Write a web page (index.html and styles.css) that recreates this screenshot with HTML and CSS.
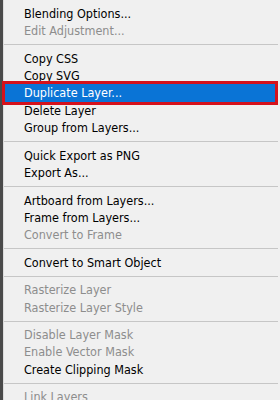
FILE: index.html
```html
<!DOCTYPE html>
<html>
<head>
<meta charset="utf-8">
<link rel="stylesheet" href="styles.css">
</head>
<body>
<div class="frame">
  <div class="edge"></div>
  <ul class="menu">
    <li class="item">Blending Options...</li>
    <li class="item off">Edit Adjustment...</li>
    <li class="sep"></li>
    <li class="item">Copy CSS</li>
    <li class="item">Copy SVG</li>
    <li class="item active">Duplicate Layer...</li>
    <li class="item">Delete Layer</li>
    <li class="item">Group from Layers...</li>
    <li class="sep"></li>
    <li class="item">Quick Export as PNG</li>
    <li class="item">Export As...</li>
    <li class="sep"></li>
    <li class="item">Artboard from Layers...</li>
    <li class="item">Frame from Layers...</li>
    <li class="item off">Convert to Frame</li>
    <li class="sep"></li>
    <li class="item">Convert to Smart Object</li>
    <li class="sep"></li>
    <li class="item off">Rasterize Layer</li>
    <li class="item off">Rasterize Layer Style</li>
    <li class="sep"></li>
    <li class="item off">Disable Layer Mask</li>
    <li class="item off">Enable Vector Mask</li>
    <li class="item">Create Clipping Mask</li>
    <li class="sep"></li>
    <li class="item off">Link Layers</li>
  </ul>
</div>
</body>
</html>
```

FILE: styles.css
```css
html, body {
  margin: 0;
  padding: 0;
  background: #f0f0f0;
  overflow: hidden;
}
.frame {
  display: flex;
  width: 280px;
  height: 400px;
  overflow: hidden;
}
.edge {
  width: 3px;
  flex: none;
  background: #4a4a4a;
}
.menu {
  list-style: none;
  margin: 0;
  padding: 5px 0 0 0;
  flex: 1;
  border-left: 1px solid #dcdcdc;
  font-family: "DejaVu Sans Condensed", "DejaVu Sans", sans-serif;
  font-stretch: condensed;
  font-size: 12.5px;
}
.item {
  height: 17.3px;
  line-height: 17.3px;
  padding-left: 20px;
  color: #000;
  white-space: nowrap;
}
.item.off {
  color: #8d8d8d;
}
.item.active {
  color: #fff;
  background: #0a74d6;
  margin-right: 5px;
  outline: 3px solid #d5121c;
  outline-offset: 0;
  margin-left: 1px;
  padding-left: 19px;
}
.sep {
  height: 1px;
  margin: 4.65px 2px 4.65px 0;
  background: #c6c6c6;
}
```
